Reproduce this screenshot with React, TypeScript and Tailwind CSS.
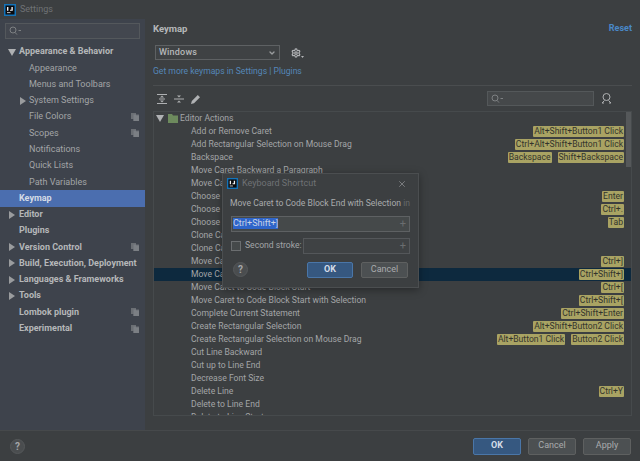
import { ChevronDown, Settings, X } from 'lucide-react';

const navItems = [
  { label: 'Appearance & Behavior', level: 0, arrow: 'down' },
  { label: 'Appearance', level: 1 },
  { label: 'Menus and Toolbars', level: 1 },
  { label: 'System Settings', level: 1, arrow: 'right' },
  { label: 'File Colors', level: 1, copy: true },
  { label: 'Scopes', level: 1, copy: true },
  { label: 'Notifications', level: 1 },
  { label: 'Quick Lists', level: 1 },
  { label: 'Path Variables', level: 1 },
  { label: 'Keymap', level: 0, active: true },
  { label: 'Editor', level: 0, arrow: 'right' },
  { label: 'Plugins', level: 0 },
  { label: 'Version Control', level: 0, arrow: 'right', copy: true },
  { label: 'Build, Execution, Deployment', level: 0, arrow: 'right' },
  { label: 'Languages & Frameworks', level: 0, arrow: 'right' },
  { label: 'Tools', level: 0, arrow: 'right' },
  { label: 'Lombok plugin', level: 0, copy: true },
  { label: 'Experimental', level: 0, copy: true },
];

const actions: { label: string; keys?: string[]; selected?: boolean }[] = [
  { label: 'Add or Remove Caret', keys: ['Alt+Shift+Button1 Click'] },
  { label: 'Add Rectangular Selection on Mouse Drag', keys: ['Ctrl+Alt+Shift+Button1 Click'] },
  { label: 'Backspace', keys: ['Backspace', 'Shift+Backspace'] },
  { label: 'Move Caret Backward a Paragraph' },
  { label: 'Move Caret Forward a Paragraph' },
  { label: 'Choose Lookup Item', keys: ['Enter'] },
  { label: 'Choose Lookup Item Dot', keys: ['Ctrl+.'] },
  { label: 'Choose Lookup Item Replace', keys: ['Tab'] },
  { label: 'Clone Caret Above' },
  { label: 'Clone Caret Below' },
  { label: 'Move Caret to Code Block End', keys: ['Ctrl+]'] },
  { label: 'Move Caret to Code Block End with Selection', keys: ['Ctrl+Shift+]'], selected: true },
  { label: 'Move Caret to Code Block Start', keys: ['Ctrl+['] },
  { label: 'Move Caret to Code Block Start with Selection', keys: ['Ctrl+Shift+['] },
  { label: 'Complete Current Statement', keys: ['Ctrl+Shift+Enter'] },
  { label: 'Create Rectangular Selection', keys: ['Alt+Shift+Button2 Click'] },
  { label: 'Create Rectangular Selection on Mouse Drag', keys: ['Alt+Button1 Click', 'Button2 Click'] },
  { label: 'Cut Line Backward' },
  { label: 'Cut up to Line End' },
  { label: 'Decrease Font Size' },
  { label: 'Delete Line', keys: ['Ctrl+Y'] },
  { label: 'Delete to Line End' },
  { label: 'Delete to Line Start' },
];

const TriangleDown = ({ className = '' }: { className?: string }) => (
  <svg width="8" height="7" viewBox="0 0 8 7" className={className}>
    <path d="M0 0h8L4 7z" fill="#afb1b3" />
  </svg>
);

const TriangleRight = () => (
  <svg width="6" height="8" viewBox="0 0 6 8">
    <path d="M0 0l6 4-6 4z" fill="#9a9c9e" />
  </svg>
);

const CopyIcon = () => (
  <svg width="8" height="8" viewBox="0 0 8 8" className="shrink-0">
    <path d="M0 0h5v1.5H8V8H2.5V6H0z" fill="#6b6f74" />
    <path d="M2.5 1.5H5v1h3V8H2.5z" fill="#7b7f84" />
  </svg>
);

const SearchGlyph = () => (
  <svg width="12" height="10" viewBox="0 0 12 10" fill="none" stroke="#7d8082" strokeWidth="1">
    <circle cx="4" cy="4" r="3" />
    <path d="M6 6.4l2 2.2M9.5 4.5h2.5" />
  </svg>
);

// IntelliJ mark: blue frame, black tile, white IJ
const AppLogo = ({ size }: { size: number }) => (
  <svg width={size} height={size} viewBox="0 0 12 12" className="shrink-0">
    <rect width="12" height="12" fill="#1473b8" />
    <rect x="1.5" y="1.5" width="9" height="9" fill="#0b0b0d" />
    <path d="M3 3h1.4v3.8H3zM7.4 3h1.4v3.8H6v-1h1.4z" fill="#f1f1f1" />
    <path d="M3 8.3h3.5v.8H3z" fill="#f1f1f1" />
  </svg>
);

const HelpCircle = ({ size }: { size: number }) => (
  <div
    className="flex shrink-0 items-center justify-center rounded-full border border-[#55585a] bg-[#4a4d4f] text-[10px] font-bold text-[#a5a7a9]"
    style={{ width: size, height: size }}
  >
    ?
  </div>
);

const KeyBadge = ({ text }: { text: string }) => (
  <span className="rounded-[1px] bg-[#a9a363] px-px text-[8.6px] leading-[11px] text-[#33342c]">
    {text}
  </span>
);

const FooterButton = ({ text, primary }: { text: string; primary?: boolean }) => (
  <button
    className={`flex h-[17px] w-[48px] items-center justify-center rounded-[2px] border text-[9px] ${
      primary
        ? 'border-[#4a76a8] bg-[#365880] font-bold text-[#d5dde8]'
        : 'border-[#5e6060] bg-[#4c5052] text-[#a9abad]'
    }`}
  >
    {text}
  </button>
);

const Sidebar = () => (
  <aside className="flex w-[145px] shrink-0 flex-col bg-[#3e434c]">
    <div className="mx-[5px] mt-[4px] flex h-[16px] items-center border border-[#54585c] bg-[#43474f] pl-[3px]">
      <SearchGlyph />
    </div>
    <nav className="mt-[5px] flex flex-col">
      {navItems.map((item) => (
        <div
          key={item.label}
          className={`relative flex h-[16.27px] items-center pr-[6px] text-[9px] ${
            item.active ? 'bg-[#4b6eaf] font-bold text-[#d4dbe6]' : item.level === 0 ? 'font-bold text-[#b5b7b9]' : 'text-[#a3a5a7]'
          } ${item.level === 0 ? 'pl-[19px]' : 'pl-[29px]'}`}
        >
          {item.arrow === 'down' && <TriangleDown className="absolute left-[8px] top-[5px]" />}
          {item.arrow === 'right' && (
            <span className={`absolute top-[4px] ${item.level === 0 ? 'left-[9px]' : 'left-[20px]'}`}>
              <TriangleRight />
            </span>
          )}
          <span className="flex-1 whitespace-nowrap">{item.label}</span>
          {item.copy && <CopyIcon />}
        </div>
      ))}
    </nav>
  </aside>
);

const KeyboardDialog = () => (
  <div className="absolute left-[222px] top-[173px] flex h-[115px] w-[197px] flex-col border border-[#4b4e50] bg-[#3c3f41] shadow-[0_2px_8px_rgba(0,0,0,0.35)]">
    <div className="flex h-[19px] items-center gap-[4px] pl-[4px] pr-[11px]">
      <AppLogo size={11} />
      <span className="flex-1 text-[9px] text-[#6f7275]">Keyboard Shortcut</span>
      <X size={10} className="text-[#85888a]" />
    </div>
    <div className="mt-[4px] overflow-hidden whitespace-nowrap pl-[7px] text-[8.6px] text-[#a9abad]">
      Move Caret to Code Block End with Selection <span className="text-[#66696b]">in</span>
    </div>
    <div className="mx-[8px] mt-[6px] flex h-[16px] items-center justify-between border border-[#5e6163] bg-[#45494a] pl-px pr-[3px]">
      <span className="bg-[#2f65ca] text-[9px] leading-[11px] text-[#c7d2e6]">Ctrl+Shift+]</span>
      <span className="text-[11px] leading-none text-[#6a6d6f]">+</span>
    </div>
    <div className="mx-[8px] mt-[6px] flex h-[16px] items-center">
      <div className="h-[10px] w-[10px] border border-[#6b6e70] bg-[#45494a]" />
      <span className="ml-[4px] whitespace-nowrap text-[8.6px] text-[#a3a5a7]">Second stroke:</span>
      <div className="ml-px flex h-[16px] flex-1 items-center justify-end border border-[#54575a] bg-[#3f4244] pr-[3px]">
        <span className="text-[11px] leading-none text-[#6a6d6f]">+</span>
      </div>
    </div>
    <div className="mx-[10px] mt-[8px] flex items-center">
      <HelpCircle size={15} />
      <div className="ml-auto flex gap-[8px]">
        <button className="flex h-[16px] w-[46px] items-center justify-center rounded-[2px] border border-[#4a76a8] bg-[#365880] text-[9px] font-bold text-[#d5dde8]">
          OK
        </button>
        <button className="flex h-[16px] w-[47px] items-center justify-center rounded-[2px] border border-[#5e6060] bg-[#4c5052] text-[9px] text-[#a9abad]">
          Cancel
        </button>
      </div>
    </div>
  </div>
);

const KeymapPanel = () => (
  <main className="flex min-w-0 flex-1 flex-col pl-[8px] pr-[8px]">
    <div className="mt-[3px] flex items-center justify-between">
      <span className="text-[9.5px] font-bold text-[#b5b7b9]">Keymap</span>
      <span className="text-[9px] font-bold text-[#4a88c7]">Reset</span>
    </div>
    <div className="ml-[2px] mt-[9px] flex items-center">
      <div className="flex h-[15px] w-[125px] items-center justify-between border border-[#5e6163] bg-[#3f4244] pl-[3px] pr-[3px]">
        <span className="text-[9px] font-medium tracking-[0.2px] text-[#b5b7b9]">Windows</span>
        <ChevronDown size={8} strokeWidth={4} className="text-[#9a9c9e]" />
      </div>
      <Settings size={10} strokeWidth={3} className="ml-[11px] text-[#b0b2b4]" />
      <svg width="3" height="2" viewBox="0 0 3 2" className="mt-[9px]">
        <path d="M0 0h3L1.5 2z" fill="#b0b2b4" />
      </svg>
    </div>
    <div className="mt-[5px] whitespace-nowrap text-[8.6px] text-[#5587b8]">
      Get more keymaps in Settings | Plugins
    </div>
    <div className="mt-[7px] h-px bg-[#4a4d4f]" />
    <div className="flex h-[25px] items-center justify-between">
      <div className="ml-[4px] flex items-center gap-[7px]">
        <svg width="10" height="10" viewBox="0 0 10 10">
          <path d="M0 0h10v1H0zM0 9h10v1H0zM2 4.5h6v1H2zM5 1.6L7 3.6H3zM5 8.4L3 6.4h4z" fill="#aeb0b2" />
        </svg>
        <svg width="10" height="10" viewBox="0 0 10 10">
          <path d="M0 4.5h10v1H0zM5 3.6L3 1.4h4zM5 6.4L7 8.6H3z" fill="#aeb0b2" />
        </svg>
        <svg width="10" height="10" viewBox="0 0 10 10">
          <path d="M0 10l.8-3L6.8 1l2.2 2.2-6 6z" fill="#b0b2b4" />
        </svg>
      </div>
      <div className="flex items-center">
        <div className="flex h-[15px] w-[107px] items-center border border-[#54585a] bg-[#45484a] pl-[3px]">
          <SearchGlyph />
        </div>
        <svg width="12" height="11" viewBox="0 0 12 11" fill="none" stroke="#aeb0b2" className="ml-[7px] mr-[19px]">
          <circle cx="5.5" cy="4" r="3.5" />
          <path d="M3.5 7.5L1 10M7.5 7.5L10 10M1 10h2M8 10h2" />
        </svg>
      </div>
    </div>
    <div className="relative h-[305px] overflow-hidden border border-[#464a4c] bg-[#3c3f41]">
      <div className="absolute right-0 top-0 h-[55px] w-[5px] bg-[#55585a]" />
      <div className="flex h-[13px] items-center pl-[2px] text-[8.6px] text-[#a3a5a7]">
        <TriangleDown />
        <svg width="10" height="9" viewBox="0 0 10 9" className="ml-[4px] mr-[2px]">
          <path d="M0 0h4l1 1.5h5V9H0z" fill="#6d8a5d" />
        </svg>
        Editor Actions
      </div>
      {actions.map((row) => (
        <div
          key={row.label}
          className={`flex h-[13px] items-center justify-between pl-[37px] pr-[7px] text-[8.6px] text-[#a3a5a7] ${
            row.selected ? 'bg-[#0d293e]' : ''
          }`}
        >
          <span className="whitespace-nowrap">{row.label}</span>
          {row.keys && (
            <span className="flex gap-[6px]">
              {row.keys.map((k) => (
                <KeyBadge key={k} text={k} />
              ))}
            </span>
          )}
        </div>
      ))}
    </div>
  </main>
);

const App = () => {
  return (
    <div className="relative flex h-[461px] w-[640px] flex-col overflow-hidden bg-[#3c3f41] font-['Roboto',sans-serif]">
      <header className="flex h-[19px] shrink-0 items-center gap-[4px] pl-[4px]">
        <AppLogo size={12} />
        <span className="text-[9px] text-[#6f7275]">Settings</span>
      </header>
      <div className="flex min-h-0 flex-1">
        <Sidebar />
        <KeymapPanel />
      </div>
      <footer className="flex h-[31px] shrink-0 items-center justify-between border-t border-[#46494b] pl-[10px] pr-[9px]">
        <HelpCircle size={15} />
        <div className="flex gap-[7px]">
          <FooterButton text="OK" primary />
          <FooterButton text="Cancel" />
          <FooterButton text="Apply" />
        </div>
      </footer>
      <KeyboardDialog />
    </div>
  );
};

export default App;
